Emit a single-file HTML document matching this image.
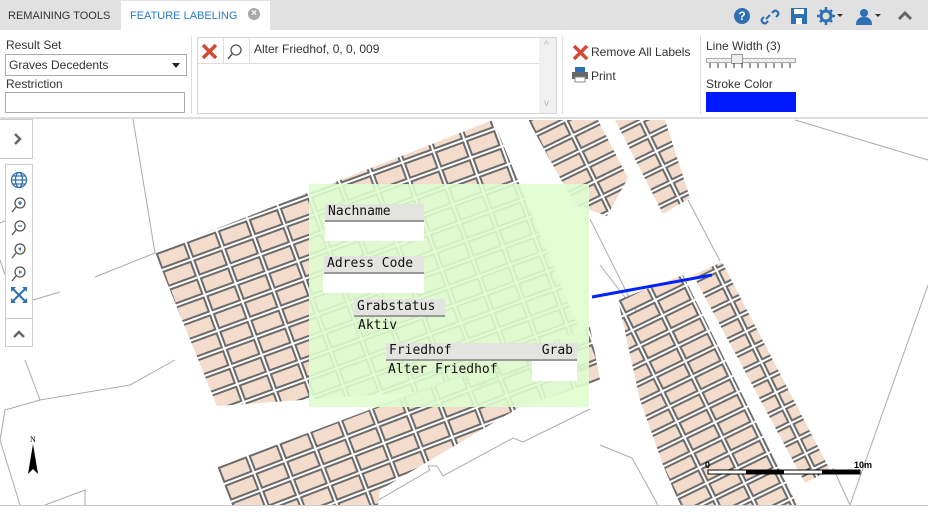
<!DOCTYPE html>
<html><head><meta charset="utf-8"><style>
*{margin:0;padding:0;box-sizing:border-box}
body{width:928px;height:532px;overflow:hidden;background:#fff;font-family:"Liberation Sans",sans-serif;font-size:12px;color:#333;position:relative}
.abs{position:absolute}
.top{left:0;top:0;width:928px;height:30px;background:#e1e1e1}
.tab{top:1px;height:29px;line-height:30px;font-size:11px;padding:0 8px}
.lbl{font-size:12px;color:#333}
.ml{font-family:"DejaVu Sans Mono","Liberation Mono",monospace;font-size:13px;color:#111}
.hd{background:#e3e3df;border-bottom:2px solid #9a9a9a;padding-left:3px;height:18px;line-height:16px}
</style></head><body>
<div class="abs top"></div>
<div class="abs tab" style="left:0;color:#333">REMAINING TOOLS</div>
<div class="abs tab" style="left:121px;width:149px;background:#fff;color:#2a7ac8;padding-left:9px">FEATURE LABELING</div>
<div class="abs" style="left:248px;top:8px;width:12px;height:12px;border-radius:6px;background:#a8a8a8;color:#fff;font-size:10px;line-height:12px;text-align:center;font-weight:bold">×</div>
<svg class="abs" style="left:730px;top:5px" width="190" height="22">
<circle cx="12" cy="11" r="8" fill="#2f6fb4"/><text x="12" y="15" font-size="12" font-weight="bold" fill="#fff" text-anchor="middle" font-family="Liberation Sans">?</text>
<g fill="none" stroke="#2f6fb4" stroke-width="2.2"><path d="M36 14 l4-4 M34 12 l-2 2 a3 3 0 0 0 4 4 l2-2 M42 8 l2-2 a3 3 0 0 1 4 4 l-2 2"/></g>
<rect x="61" y="3" width="16" height="16" fill="#2f6fb4"/><rect x="64" y="4" width="10" height="5" fill="#fff"/><rect x="66" y="13" width="6" height="6" fill="#fff"/>
<circle cx="96" cy="11" r="5" fill="none" stroke="#2f6fb4" stroke-width="3"/><g stroke="#2f6fb4" stroke-width="2.5"><path d="M96 2v4M96 16v4M87 11h4M101 11h4M90 5l3 3M102 17l-3-3M102 5l-3 3M90 17l3-3"/></g>
<path d="M107 9h6l-3 3z" fill="#333"/>
<circle cx="134" cy="8" r="4" fill="#2f6fb4"/><path d="M126 20 q0-8 8-8 q8 0 8 8z" fill="#2f6fb4"/><path d="M145 9h6l-3 3z" fill="#333"/>
<path d="M169 14l6-6 6 6" fill="none" stroke="#666" stroke-width="3"/>
</svg>
<div class="abs lbl" style="left:6px;top:38px">Result Set</div>
<div class="abs" style="left:5px;top:54px;width:182px;height:22px;border:1px solid #aaa;padding-left:3px;line-height:21px">Graves Decedents<span style="position:absolute;right:6px;top:8px;border:4px solid transparent;border-top:5px solid #222"></span></div>
<div class="abs lbl" style="left:6px;top:77px">Restriction</div>
<div class="abs" style="left:5px;top:92px;width:180px;height:21px;border:1px solid #aaa"></div>
<div class="abs" style="left:191px;top:36px;width:1px;height:78px;background:#ddd"></div>
<div class="abs" style="left:197px;top:37px;width:360px;height:77px;border:1px solid #d5d5d5"></div>
<div class="abs" style="left:198px;top:38px;width:341px;height:26px;border-bottom:1px solid #ddd"></div>
<div class="abs" style="left:223px;top:38px;width:1px;height:26px;background:#ddd"></div>
<div class="abs" style="left:249px;top:38px;width:1px;height:26px;background:#ddd"></div>
<div class="abs" style="left:539px;top:38px;width:17px;height:75px;background:#f0f0f0"></div>
<div class="abs" style="left:544px;top:40px;color:#bbb;font-size:10px">^</div>
<div class="abs" style="left:544px;top:98px;color:#bbb;font-size:10px">v</div>
<svg class="abs" style="left:200px;top:42px" width="48" height="20"><path d="M3 3l13 13M16 3L3 16" stroke="#d24a35" stroke-width="3.5"/><circle cx="36" cy="8" r="5" fill="none" stroke="#555" stroke-width="1.3"/><path d="M32 12l-4 5" stroke="#555" stroke-width="1.5"/></svg>
<div class="abs" style="left:254px;top:42px;color:#333">Alter Friedhof, 0, 0, 009</div>
<div class="abs" style="left:562px;top:36px;width:1px;height:78px;background:#ddd"></div>
<svg class="abs" style="left:571px;top:43px" width="20" height="44"><path d="M3 3l13 13M16 3L3 16" stroke="#d24a35" stroke-width="3.5"/><rect x="4" y="24" width="10" height="5" fill="#2f6fb4"/><rect x="1" y="29" width="16" height="7" fill="#666"/><rect x="4" y="34" width="10" height="5" fill="#fff" stroke="#888"/></svg>
<div class="abs" style="left:591px;top:45px;font-size:12px">Remove All Labels</div>
<div class="abs" style="left:591px;top:69px;font-size:12px">Print</div>
<div class="abs" style="left:700px;top:36px;width:1px;height:78px;background:#ddd"></div>
<div class="abs lbl" style="left:706px;top:39px">Line Width (3)</div>
<div class="abs" style="left:706px;top:58px;width:90px;height:5px;border:1px solid #aaa;background:#eee"></div>
<div class="abs" style="left:731px;top:54px;width:12px;height:10px;background:#eee;border:1px solid #999"></div>
<svg class="abs" style="left:706px;top:63px" width="92" height="6"><path d="M4 0v5M12 0v5M20 0v5M28 0v5M36 0v5M44 0v5M52 0v5M60 0v5M68 0v5M76 0v5M84 0v5" stroke="#333"/></svg>
<div class="abs lbl" style="left:706px;top:77px">Stroke Color</div>
<div class="abs" style="left:706px;top:92px;width:90px;height:20px;background:#0019ff"></div>
<div class="abs" style="left:0;top:117px;width:928px;height:2px;background:#ddd"></div>
<svg class="abs" style="left:0;top:119px" width="928" height="386">
<defs>
<pattern id="pA" width="33" height="19" patternUnits="userSpaceOnUse" patternTransform="translate(155,134) rotate(-20)"><rect x="1.5" y="1.5" width="29" height="15" fill="#f3dccb" stroke="#6b6b6b" stroke-width="2"/></pattern>
<pattern id="pB" width="33" height="19" patternUnits="userSpaceOnUse" patternTransform="translate(217,348) rotate(-21)"><rect x="1.5" y="1.5" width="29" height="15" fill="#f3dccb" stroke="#6b6b6b" stroke-width="2"/></pattern>
<pattern id="pC" width="34" height="17" patternUnits="userSpaceOnUse" patternTransform="translate(528,1) rotate(-26)"><rect x="1.5" y="1.5" width="30" height="13" fill="#f3dccb" stroke="#6b6b6b" stroke-width="2"/></pattern>
<pattern id="pE" width="34" height="17" patternUnits="userSpaceOnUse" patternTransform="translate(618,181) rotate(-26)"><rect x="1.5" y="1.5" width="30" height="13" fill="#f3dccb" stroke="#6b6b6b" stroke-width="2"/></pattern>
</defs>
<g fill="none" stroke="#aaa" stroke-width="1">
<path d="M133 0 L155 134 L95 158"/><path d="M0 104 L5 102"/><path d="M0 141 L5 156"/><path d="M33 181 L60 173"/>
<path d="M25 241 L40 281 L130 266 L175 241"/><path d="M40 281 L5 291 L0 321 L20 386"/><path d="M45 386 L85 371 L85 386"/>
<path d="M370 386 L430 351 L428 347 L437 347 L443 357 L513 319 L523 323 L590 290"/>
<path d="M795 1 L928 41"/><path d="M928 166 L850 386 L833 349"/>
<path d="M688 81 L720 142"/><path d="M600 146 L627 181"/><path d="M600 326 L632 339 L658 386"/>
<path d="M590 100 L640 200"/>
</g>
<polygon points="155,134 493,1 600,260 217,287" fill="url(#pA)"/>
<polygon points="217,348 590,208 600,261 520,288 380,371 378,386 230,386" fill="url(#pB)"/>
<polygon points="528,1 598,1 628,59 607,97 575,86" fill="url(#pC)"/>
<polygon points="615,1 665,1 690,79 663,95" fill="url(#pC)"/>
<polygon points="618,181 683,156 797,386 680,386 663,346 640,281" fill="url(#pE)"/>
<polygon points="693,156 722,143 830,351 805,364" fill="url(#pE)"/>
<rect x="309" y="65" width="280" height="223" fill="#dffccf" fill-opacity="0.9"/>
<path d="M592 178 L712 156" stroke="#0022ff" stroke-width="3"/>
<path d="M28 355 L33 325 L38 355 L33 350Z" fill="#000"/>
<text x="30" y="323" font-size="8" font-family="Liberation Serif">N</text>
<rect x="708" y="351" width="152" height="4" fill="#fff" stroke="#000"/>
<rect x="746" y="351" width="38" height="4" fill="#000"/><rect x="822" y="351" width="38" height="4" fill="#000"/>
<text x="705" y="349" font-size="9" font-family="Liberation Sans" font-weight="bold">0</text>
<text x="854" y="349" font-size="9" font-family="Liberation Sans" font-weight="bold">10m</text>
</svg>
<div class="abs" style="left:0;top:505px;width:928px;height:1px;background:#ccc"></div>
<div class="abs ml hd" style="left:325px;top:204px;width:99px">Nachname</div>
<div class="abs" style="left:325px;top:222px;width:99px;height:19px;background:#fff"></div>
<div class="abs ml hd" style="left:324px;top:256px;width:100px">Adress Code</div>
<div class="abs" style="left:323px;top:274px;width:101px;height:19px;background:#fff"></div>
<div class="abs ml hd" style="left:354px;top:299px;width:91px">Grabstatus</div>
<div class="abs ml" style="left:358px;top:318px">Aktiv</div>
<div class="abs ml hd" style="left:386px;top:343px;width:191px">Friedhof<span style="float:right;padding-right:4px">Grab</span></div>
<div class="abs ml" style="left:388px;top:362px">Alter Friedhof</div>
<div class="abs" style="left:532px;top:361px;width:45px;height:20px;background:#fff"></div>
<div class="abs" style="left:0;top:119px;width:33px;height:40px;border:1px solid #ccc;border-left:none;background:#fff"></div>
<svg class="abs" style="left:13px;top:132px" width="10" height="14"><path d="M2 2l5 5-5 5" fill="none" stroke="#666" stroke-width="2.5"/></svg>
<div class="abs" style="left:5px;top:164px;width:28px;height:183px;border:1px solid #ccc;background:#fff"></div>
<div class="abs" style="left:5px;top:318px;width:28px;height:1px;background:#ccc"></div>
<svg class="abs" style="left:8px;top:170px" width="22" height="170">
<g fill="none" stroke="#2f6fb4" stroke-width="1.3"><circle cx="11" cy="10" r="7.5"/><ellipse cx="11" cy="10" rx="3.5" ry="7.5"/><path d="M3.5 10h15M5 6h12M5 14h12"/></g>
<g fill="none" stroke="#555" stroke-width="1.3"><circle cx="12" cy="33" r="5"/><path d="M8 37l-4 5"/><circle cx="12" cy="56" r="5"/><path d="M8 60l-4 5"/><circle cx="12" cy="79" r="5"/><path d="M8 83l-4 5"/><circle cx="12" cy="102" r="5"/><path d="M8 106l-4 5"/></g>
<path d="M10 33h4M12 31v4M10 56h4" stroke="#2f6fb4" stroke-width="1.3"/>
<path d="M13 77l-3 2 3 2z M11 100l3 2-3 2z" fill="#2f6fb4"/>
<g stroke="#2f6fb4" stroke-width="2"><path d="M4 118l14 14M18 118L4 132"/></g><path d="M3 117h5l-5 5zM19 117h-5l5 5zM3 133h5l-5-5zM19 133h-5l5-5z" fill="#2f6fb4"/>
<path d="M6 167l5-5 5 5" fill="none" stroke="#666" stroke-width="2.5"/>
</svg>
</body></html>
